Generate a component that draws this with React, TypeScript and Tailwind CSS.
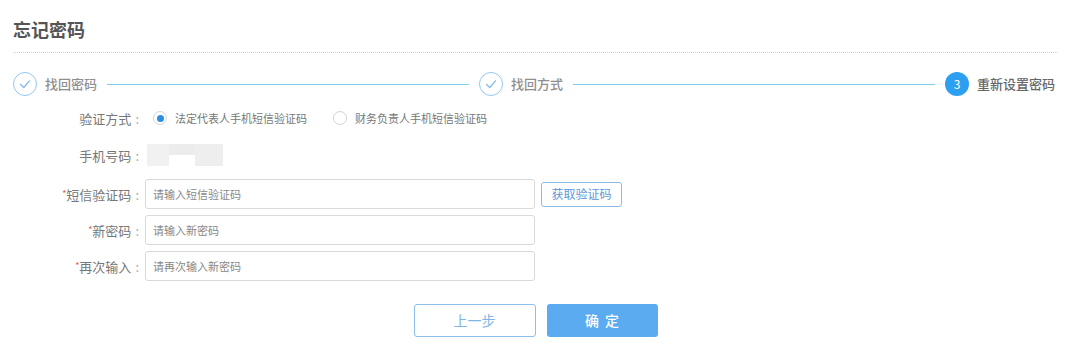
import React from "react";

const FONT = { fontFamily: '"Noto Sans CJK SC", "Noto Sans", sans-serif' };

function DoneCircle() {
  return (
    <span className="w-6 h-6 rounded-full border border-[#92c8ee] flex items-center justify-center shrink-0">
      <svg width="14" height="14" viewBox="0 0 14 14" fill="none">
        <polyline points="2.5,7.5 5.8,10.5 11.5,3.8" stroke="#7fb9e6" strokeWidth="1.2" strokeLinecap="round" strokeLinejoin="round" />
      </svg>
    </span>
  );
}

function Radio({ checked, label }: { checked?: boolean; label: string }) {
  return (
    <label className="flex items-center gap-[8px] text-[11px] text-[#777]">
      <span className="w-[14px] h-[14px] rounded-full border border-[#d4d4d4] flex items-center justify-center bg-white">
        {checked && <span className="w-[7px] h-[7px] rounded-full bg-[#2a8fe2]" />}
      </span>
      {label}
    </label>
  );
}

function Label({ text, required }: { text: string; required?: boolean }) {
  return (
    <div className="w-[132px] shrink-0 text-right pr-[6px] text-[13px] text-[#777] leading-none">
      {required && <span className="text-[#e5554f] text-[9px] align-top relative top-[1px]">*</span>}
      {text}
      <span className="ml-[4px] text-[#aaa]">:</span>
    </div>
  );
}

function Field({ placeholder }: { placeholder: string }) {
  return (
    <input
      placeholder={placeholder}
      className="w-[390px] h-[30px] border border-[#d9d9d9] rounded-[3px] px-[7px] text-[11px] text-[#555] placeholder:text-[#888] outline-none"
      style={FONT}
    />
  );
}

export default function App() {
  return (
    <div className="w-[1075px] h-[360px] bg-white px-[13px] pr-[17px]" style={FONT}>
      {/* 标题 */}
      <div className="pt-[17px] pb-[11px] border-b border-dotted border-[#cfcfcf]">
        <h1 className="text-[18px] leading-[24px] font-bold text-[#555]">忘记密码</h1>
      </div>

      {/* 步骤条 */}
      <div className="mt-[19px] h-6 flex items-center pr-[3px]">
        <DoneCircle />
        <span className="ml-[8px] text-[13px] font-medium text-[#8f8f8f]">找回密码</span>
        <span className="flex-1 h-px bg-[#7fcdef] mx-[10px]" />
        <DoneCircle />
        <span className="ml-[8px] text-[13px] font-medium text-[#8f8f8f]">找回方式</span>
        <span className="flex-1 h-px bg-[#7fcdef] mx-[10px]" />
        <span className="w-6 h-6 rounded-full bg-[#2c9ff0] text-white text-[12px] flex items-center justify-center shrink-0">3</span>
        <span className="ml-[8px] text-[13px] font-medium text-[#666]">重新设置密码</span>
      </div>

      {/* 表单 */}
      <div className="mt-[10px] h-6 flex items-center">
        <Label text="验证方式" />
        <div className="ml-[8px] flex items-center gap-[26px]">
          <Radio checked label="法定代表人手机短信验证码" />
          <Radio label="财务负责人手机短信验证码" />
        </div>
      </div>

      <div className="mt-[13px] h-6 flex items-center">
        <Label text="手机号码" />
        <div className="ml-[2px] w-[76px] h-[22px] flex">
          <div className="w-[22px] h-full bg-[#f1f1f1]" />
          <div className="w-[26px] h-full flex flex-col">
            <div className="h-[11px] bg-[#ececec]" />
            <div className="flex-1 bg-white" />
          </div>
          <div className="flex-1 h-full bg-[#eeeeee]" />
        </div>
      </div>

      <div className="mt-[12px] flex items-center">
        <Label text="短信验证码" required />
        <Field placeholder="请输入短信验证码" />
        <button className="ml-[6px] w-[81px] h-[25px] border border-[#8dbbe8] rounded-[3px] text-[12px] text-[#5d97d6] bg-white" style={FONT}>
          获取验证码
        </button>
      </div>

      <div className="mt-[6px] flex items-center">
        <Label text="新密码" required />
        <Field placeholder="请输入新密码" />
      </div>

      <div className="mt-[6px] flex items-center">
        <Label text="再次输入" required />
        <Field placeholder="请再次输入新密码" />
      </div>

      {/* 按钮 */}
      <div className="mt-[23px] flex justify-center gap-[11px]">
        <button className="w-[122px] h-[33px] border border-[#8cc0ec] rounded-[3px] bg-white text-[14px] text-[#7eb4e6]" style={FONT}>
          上一步
        </button>
        <button className="w-[111px] h-[33px] rounded-[3px] bg-[#5aabf0] text-[14px] text-white font-medium tracking-[6px] pl-[6px]" style={FONT}>
          确定
        </button>
      </div>
    </div>
  );
}
